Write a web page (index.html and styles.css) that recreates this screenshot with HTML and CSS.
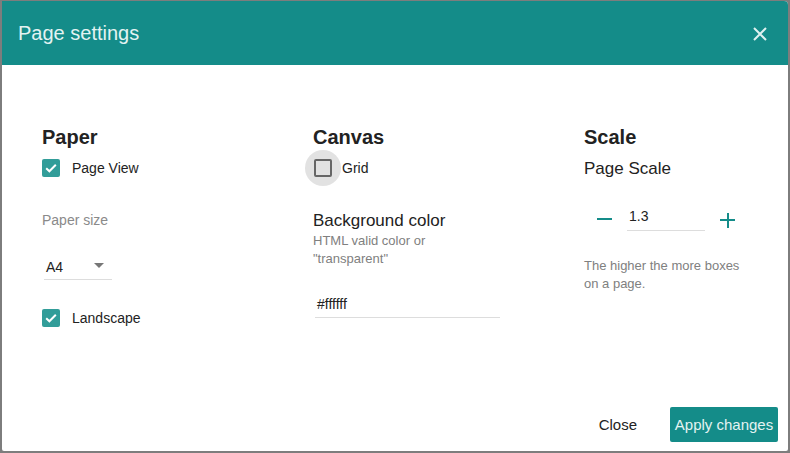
FILE: index.html
```html
<!DOCTYPE html>
<html>
<head>
<meta charset="utf-8">
<link rel="stylesheet" href="styles.css">
</head>
<body>
<div class="dialog">
  <div class="header">
    <div class="title">Page settings</div>
    <svg class="close-x" width="16" height="16" viewBox="0 0 16 16"><path d="M2 2L14 14M14 2L2 14" stroke="#dff1f0" stroke-width="2" fill="none"/></svg>
  </div>
  <div class="body">
    <div class="col">
      <div class="heading">Paper</div>
      <div class="check-row">
        <span class="box checked"><svg width="18" height="18" viewBox="0 0 18 18"><path d="M4.2 9.2L7.4 12.3L13.8 5.8" stroke="#fff" stroke-width="2" fill="none"/></svg></span>
        <span class="check-label">Page View</span>
      </div>
      <div class="muted-label">Paper size</div>
      <div class="select">
        <span>A4</span>
        <span class="caret"></span>
      </div>
      <div class="check-row landscape">
        <span class="box checked"><svg width="18" height="18" viewBox="0 0 18 18"><path d="M4.2 9.2L7.4 12.3L13.8 5.8" stroke="#fff" stroke-width="2" fill="none"/></svg></span>
        <span class="check-label">Landscape</span>
      </div>
    </div>
    <div class="col">
      <div class="heading">Canvas</div>
      <div class="check-row">
        <span class="box-wrap"><span class="halo"></span><span class="box empty"></span></span>
        <span class="check-label grid-label">Grid</span>
      </div>
      <div class="sub-heading bg-heading">Background color</div>
      <div class="helper">HTML valid color or<br>"transparent"</div>
      <div class="text-input color-input">#ffffff</div>
    </div>
    <div class="col">
      <div class="heading">Scale</div>
      <div class="sub-heading scale-heading">Page Scale</div>
      <div class="stepper">
        <span class="minus"></span>
        <div class="text-input scale-input">1.3</div>
        <span class="plus"></span>
      </div>
      <div class="helper scale-help">The higher the more boxes<br>on a page.</div>
    </div>
  </div>
  <div class="footer">
    <button class="btn-flat">Close</button>
    <button class="btn-primary">Apply changes</button>
  </div>
</div>
</body>
</html>
```

FILE: styles.css
```css
html, body {
  margin: 0;
  padding: 0;
}
body {
  width: 790px;
  height: 453px;
  background: #7d7d7d;
  font-family: "Liberation Sans", Arial, sans-serif;
  color: #222;
  overflow: hidden;
  padding-top: 1px;
  box-sizing: border-box;
}
.dialog {
  margin-left: 2px;
  width: 786px;
  height: 450px;
  background: #fff;
  border-radius: 0 4px 2px 2px;
  display: flex;
  flex-direction: column;
  overflow: hidden;
}
.header {
  height: 64px;
  flex: none;
  background: #148c89;
  display: flex;
  align-items: center;
  justify-content: space-between;
  padding: 0 20px 0 16px;
}
.title {
  color: #e3f3f2;
  font-size: 20px;
  margin-top: 1px;
}
.close-x {
  display: block;
  margin-top: 1px;
}
.body {
  flex: 1;
  display: grid;
  grid-template-columns: 271px 271px 1fr;
  padding: 60px 0 0 40px;
}
.col {
  display: flex;
  flex-direction: column;
  align-items: flex-start;
}
.heading {
  font-size: 20px;
  font-weight: bold;
  color: #222;
  line-height: 24px;
  height: 24px;
}
.check-row {
  display: flex;
  align-items: center;
  height: 24px;
  margin-top: 7px;
}
.box {
  width: 18px;
  height: 18px;
  border-radius: 2px;
  box-sizing: border-box;
  display: block;
  position: relative;
}
.box svg { display: block; }
.box.checked {
  background: #329d99;
}
.check-label {
  font-size: 14px;
  margin-left: 12px;
  color: #222;
}
.grid-label {
  margin-left: 10px;
}
.box-wrap {
  position: relative;
  width: 18px;
  height: 18px;
  display: block;
  margin-left: 1px;
}
.halo {
  position: absolute;
  width: 36px;
  height: 36px;
  border-radius: 50%;
  background: #e2e2e2;
  left: -9px;
  top: -9px;
}
.box.empty {
  border: 2px solid #666;
  background: #e2e2e2;
}
.muted-label {
  font-size: 14px;
  color: #8a8a8a;
  line-height: 20px;
  margin-top: 30px;
}
.select {
  margin-top: 24px;
  margin-left: 2px;
  width: 68px;
  height: 26px;
  box-sizing: border-box;
  border-bottom: 1px solid #ddd;
  display: flex;
  align-items: center;
  justify-content: space-between;
  padding: 0 8px 0 2px;
  font-size: 14px;
  color: #222;
}
.caret {
  width: 0;
  height: 0;
  border-left: 5px solid transparent;
  border-right: 5px solid transparent;
  border-top: 5px solid #777;
  margin-top: -2px;
}
.landscape {
  margin-top: 26px;
}
.sub-heading {
  font-size: 17px;
  line-height: 20px;
  color: #222;
}
.bg-heading {
  margin-top: 31px;
}
.helper {
  font-size: 13px;
  line-height: 18px;
  color: #808080;
  margin-top: 1px;
}
.text-input {
  font-size: 14px;
  color: #222;
  border-bottom: 1px solid #ddd;
  box-sizing: border-box;
}
.color-input {
  width: 185px;
  height: 26px;
  line-height: 20px;
  margin-top: 24px;
  margin-left: 2px;
  padding: 2px 0 0 2px;
}
.scale-heading {
  margin-top: 10px;
}
.stepper {
  display: flex;
  align-items: center;
  margin-top: 27px;
  margin-left: 13px;
  height: 26px;
}
.minus {
  width: 15px;
  height: 2px;
  background: #148c89;
}
.scale-input {
  width: 78px;
  height: 24px;
  margin-left: 15px;
  padding: 0 0 0 2px;
  line-height: 18px;
  margin-top: 0;
}
.plus {
  width: 15px;
  height: 15px;
  margin-left: 15px;
  position: relative;
  margin-top: 2px;
}
.plus::before, .plus::after {
  content: "";
  position: absolute;
  background: #148c89;
}
.plus::before {
  left: 0;
  top: 6.5px;
  width: 15px;
  height: 2px;
}
.plus::after {
  left: 6.5px;
  top: 0;
  width: 2px;
  height: 15px;
}
.scale-help {
  margin-top: 25px;
}
.footer {
  flex: none;
  display: flex;
  justify-content: flex-end;
  align-items: center;
  padding: 0 10px 9px 0;
  gap: 21px;
}
.footer button {
  font-family: "Liberation Sans", Arial, sans-serif;
  font-size: 15px;
  border: none;
  cursor: pointer;
}
.btn-flat {
  background: transparent;
  color: #222;
  padding: 0 12px;
  height: 35px;
}
.btn-primary {
  background: #148c89;
  color: #e3f3f2;
  height: 35px;
  width: 108px;
  border-radius: 2px;
  padding: 0;
}
```
